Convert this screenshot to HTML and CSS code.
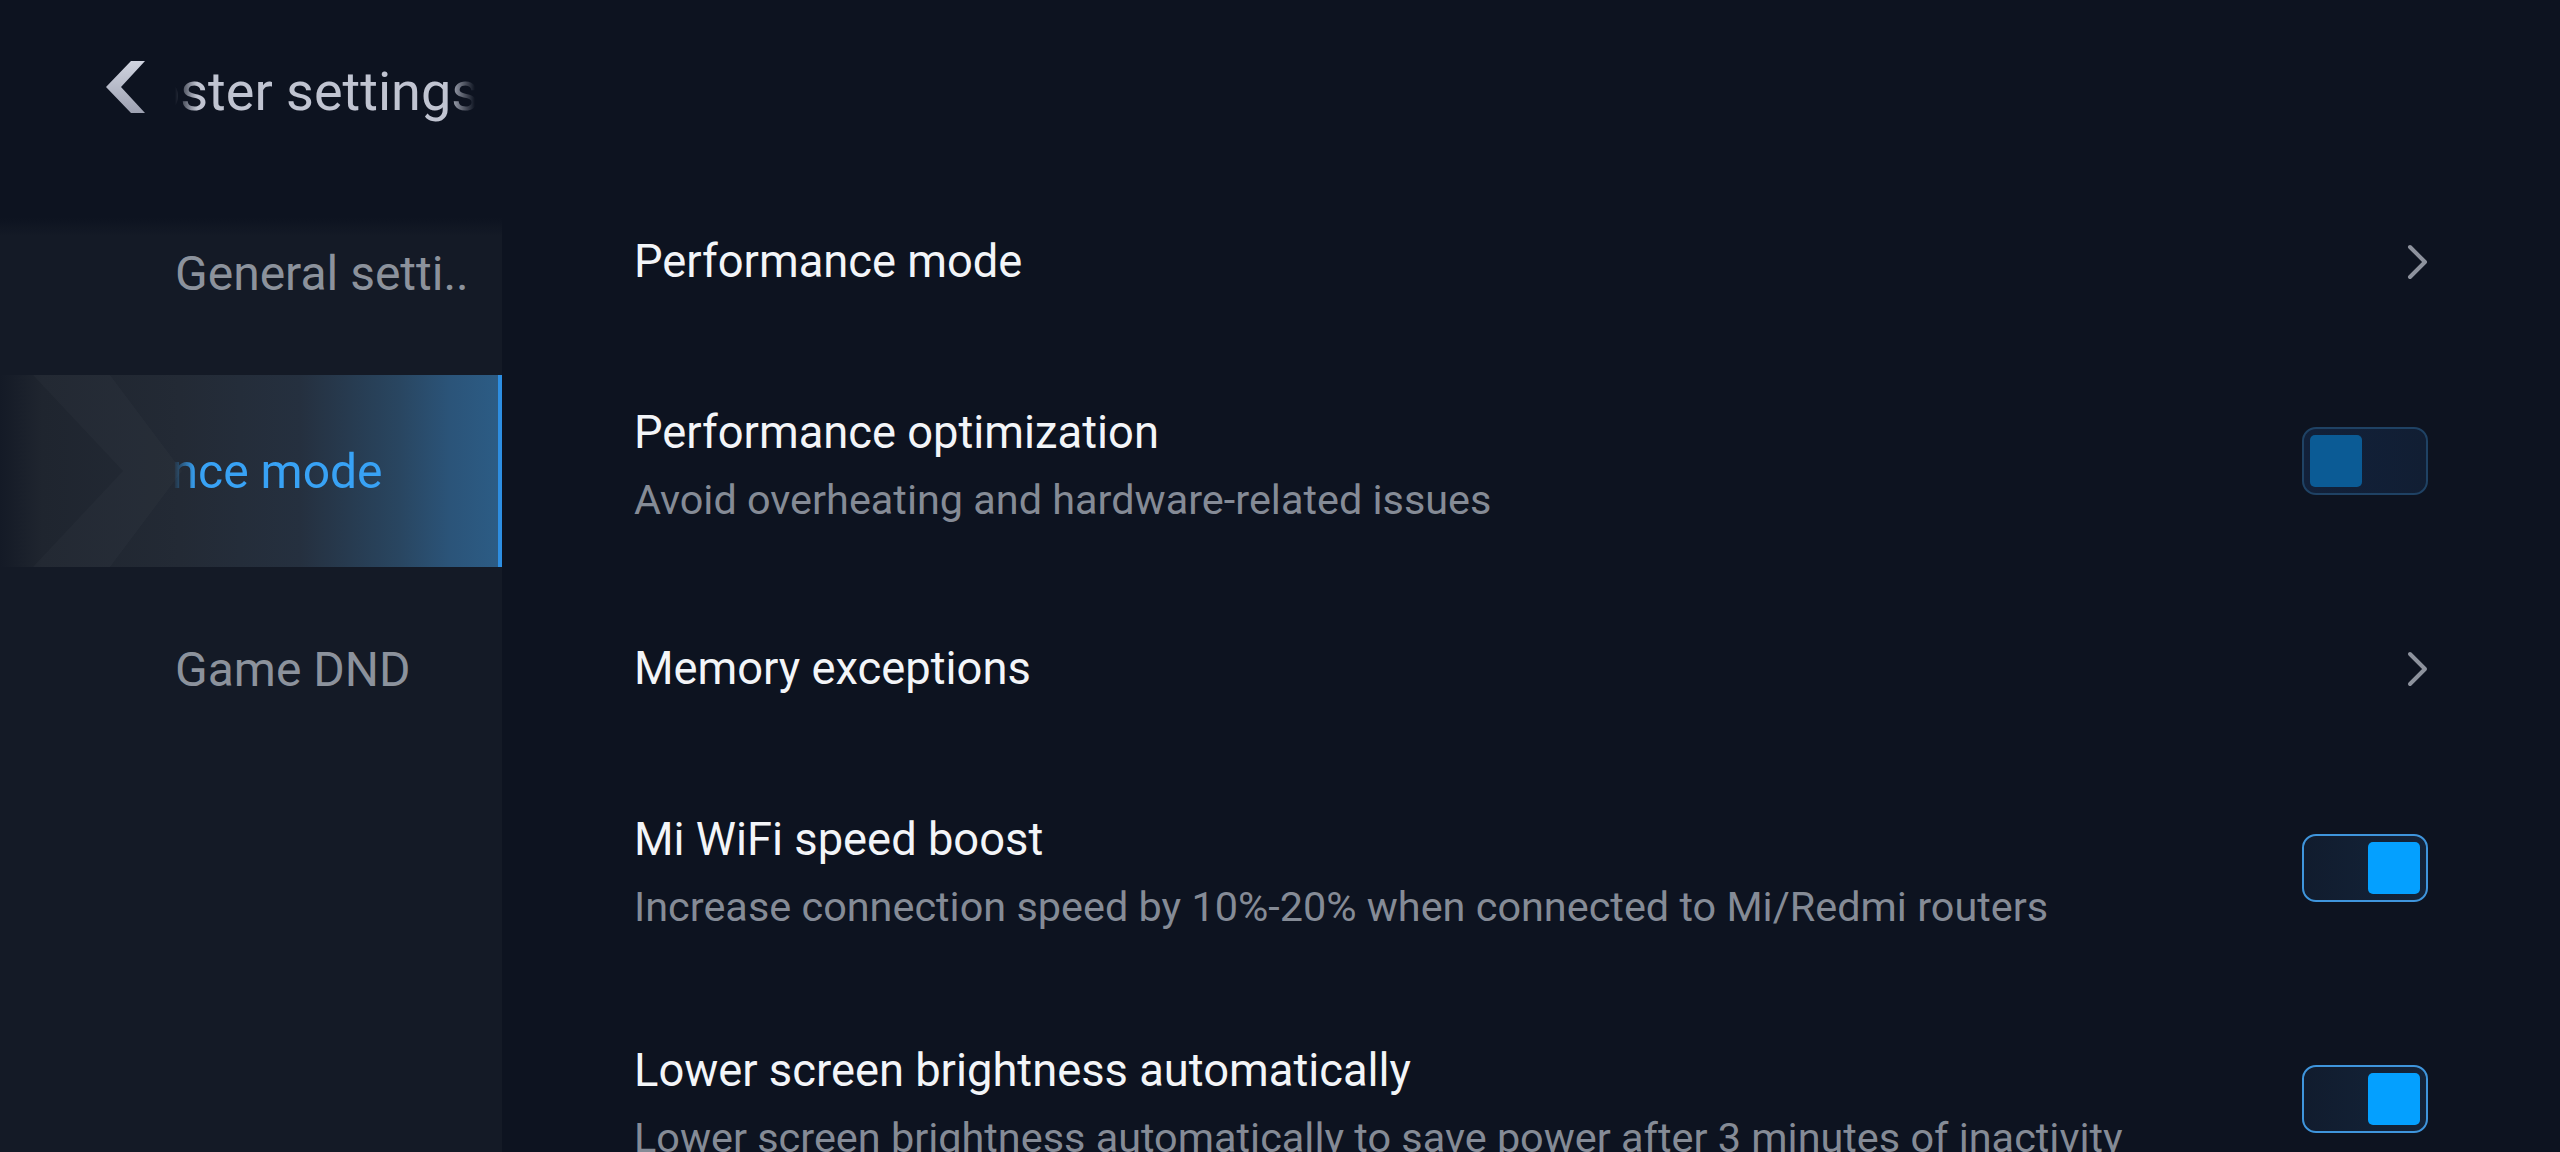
FILE: index.html
```html
<!DOCTYPE html>
<html lang="en">
<head>
<meta charset="utf-8">
<title>Booster settings</title>
<link rel="stylesheet" href="styles.css">
</head>
<body>
<div class="app">
  <header class="topbar">
    <svg class="back" width="42" height="54" viewBox="0 0 42 54" aria-hidden="true">
      <defs>
        <linearGradient id="bg1" x1="0" y1="0" x2="0" y2="1">
          <stop offset="0" stop-color="#d0d4e0"/>
          <stop offset="1" stop-color="#9da1b1"/>
        </linearGradient>
      </defs>
      <polygon points="26,1 40,1 16,27 40,53 26,53 1,27" fill="url(#bg1)"/>
    </svg>
    <div class="marquee title-marquee"><span class="marquee-text">Booster settings</span></div>
  </header>
  <div class="body">
    <nav class="sidebar">
      <div class="nav-item"><span class="nav-label">General setti..</span></div>
      <div class="nav-item active">
        <svg class="deco" width="200" height="192" viewBox="0 0 200 192" aria-hidden="true">
          <polygon points="33,0 110,0 182,96 110,192 33,192 123,96" fill="#ffffff" fill-opacity="0.018"/>
        </svg>
        <div class="marquee nav-marquee"><span class="marquee-text nav-active-text">Performance mode</span></div>
      </div>
      <div class="nav-item"><span class="nav-label">Game DND</span></div>
    </nav>
    <main class="content">
      <div class="row">
        <div class="row-text"><div class="row-title">Performance mode</div></div>
        <svg class="chev" width="24" height="36" viewBox="0 0 24 36" aria-hidden="true"><path d="M4 3 L19 18 L4 33" fill="none" stroke="#8d929d" stroke-width="4" stroke-linecap="round" stroke-linejoin="round"/></svg>
      </div>
      <div class="row">
        <div class="row-text">
          <div class="row-title">Performance optimization</div>
          <div class="row-sub">Avoid overheating and hardware-related issues</div>
        </div>
        <div class="toggle off"><span class="knob"></span></div>
      </div>
      <div class="row">
        <div class="row-text"><div class="row-title">Memory exceptions</div></div>
        <svg class="chev" width="24" height="36" viewBox="0 0 24 36" aria-hidden="true"><path d="M4 3 L19 18 L4 33" fill="none" stroke="#8d929d" stroke-width="4" stroke-linecap="round" stroke-linejoin="round"/></svg>
      </div>
      <div class="row">
        <div class="row-text">
          <div class="row-title">Mi WiFi speed boost</div>
          <div class="row-sub">Increase connection speed by 10%-20% when connected to Mi/Redmi routers</div>
        </div>
        <div class="toggle on"><span class="knob"></span></div>
      </div>
      <div class="row">
        <div class="row-text">
          <div class="row-title">Lower screen brightness automatically</div>
          <div class="row-sub">Lower screen brightness automatically to save power after 3 minutes of inactivity</div>
        </div>
        <div class="toggle on"><span class="knob"></span></div>
      </div>
    </main>
  </div>
</div>
</body>
</html>
```

FILE: styles.css
```css
html, body {
  margin: 0;
  padding: 0;
  background: #0d1320;
  width: 2560px;
  height: 1152px;
  overflow: hidden;
  font-family: Roboto, "Noto Sans", "Liberation Sans", sans-serif;
}

.app {
  width: 2560px;
  height: 1152px;
  display: flex;
  flex-direction: column;
}

.topbar {
  height: 174px;
  flex: none;
  display: flex;
  align-items: center;
  padding-left: 105px;
  box-sizing: border-box;
}

.back {
  display: block;
  flex: none;
}

.marquee {
  overflow: hidden;
  white-space: nowrap;
  flex: none;
}

.marquee-text {
  display: inline-block;
}

.title-marquee {
  width: 300px;
  margin-left: 28px;
  font-size: 54px;
  line-height: 64px;
  color: #c0c4d1;
  -webkit-mask-image: linear-gradient(90deg, transparent 0, #000 22px, #000 272px, transparent 300px);
  mask-image: linear-gradient(90deg, transparent 0, #000 22px, #000 272px, transparent 300px);
  margin-top: 9px;
}

.title-marquee .marquee-text {
  margin-left: -90px;
}

.body {
  flex: 1;
  display: grid;
  grid-template-columns: 502px 1fr;
  min-height: 0;
}

.sidebar {
  display: flex;
  flex-direction: column;
  gap: 6px;
  padding-top: 3px;
  background: linear-gradient(180deg, rgba(20, 26, 38, 0) 0, rgba(20, 26, 38, 0) 44px, #141a26 62px, #141a26 100%);
}

.nav-item {
  height: 192px;
  display: flex;
  align-items: center;
  padding-left: 175px;
  box-sizing: border-box;
  font-size: 48px;
  color: #8c929c;
  position: relative;
}

.nav-label {
  white-space: nowrap;
}

.nav-item.active {
  background: linear-gradient(90deg, rgba(32, 38, 49, 0) 0, #1f252f 42px, #232a35 180px, #25303f 300px, #294661 400px, #2b5479 450px, #2c5c85 498px);
  border-right: 4px solid #2d8ee2;
}

.deco {
  position: absolute;
  left: 0;
  top: 0;
  pointer-events: none;
}

.nav-marquee {
  width: 290px;
  margin-left: -2px;
  position: relative;
  -webkit-mask-image: linear-gradient(90deg, transparent 0, #000 22px, #000 100%);
  mask-image: linear-gradient(90deg, transparent 0, #000 22px, #000 100%);
}

.nav-active-text {
  color: #38a2f5;
  margin-left: -202px;
}

.content {
  padding: 0 132px;
  display: flex;
  flex-direction: column;
}

.row {
  min-height: 176px;
  padding: 53px 0;
  box-sizing: border-box;
  display: flex;
  align-items: center;
  justify-content: space-between;
  flex: none;
}

.row-text {
  display: flex;
  flex-direction: column;
}

.row-title {
  font-size: 45.3px;
  line-height: 60px;
  color: #f3f5f8;
  white-space: nowrap;
}

.row-sub {
  font-size: 41.4px;
  line-height: 56px;
  color: #858b96;
  margin-top: 9px;
  white-space: nowrap;
}

.chev {
  display: block;
  flex: none;
  margin-right: -2px;
}

.toggle {
  width: 126px;
  height: 68px;
  box-sizing: border-box;
  border-radius: 14px;
  border: 2px solid #3f95dc;
  padding: 6px;
  display: flex;
  align-items: center;
  flex: none;
  margin-bottom: 10px;
  background: linear-gradient(90deg, #111c2e 0, #14243a 100%);
}

.knob {
  width: 52px;
  height: 52px;
  border-radius: 5px;
  display: block;
}

.toggle.on {
  justify-content: flex-end;
}

.toggle.on .knob {
  background: #04a0ff;
}

.toggle.off {
  border-color: #1f4264;
  justify-content: flex-start;
  background: linear-gradient(90deg, #12213a 0, #111e33 100%);
}

.toggle.off .knob {
  background: #0b5b95;
}
```
